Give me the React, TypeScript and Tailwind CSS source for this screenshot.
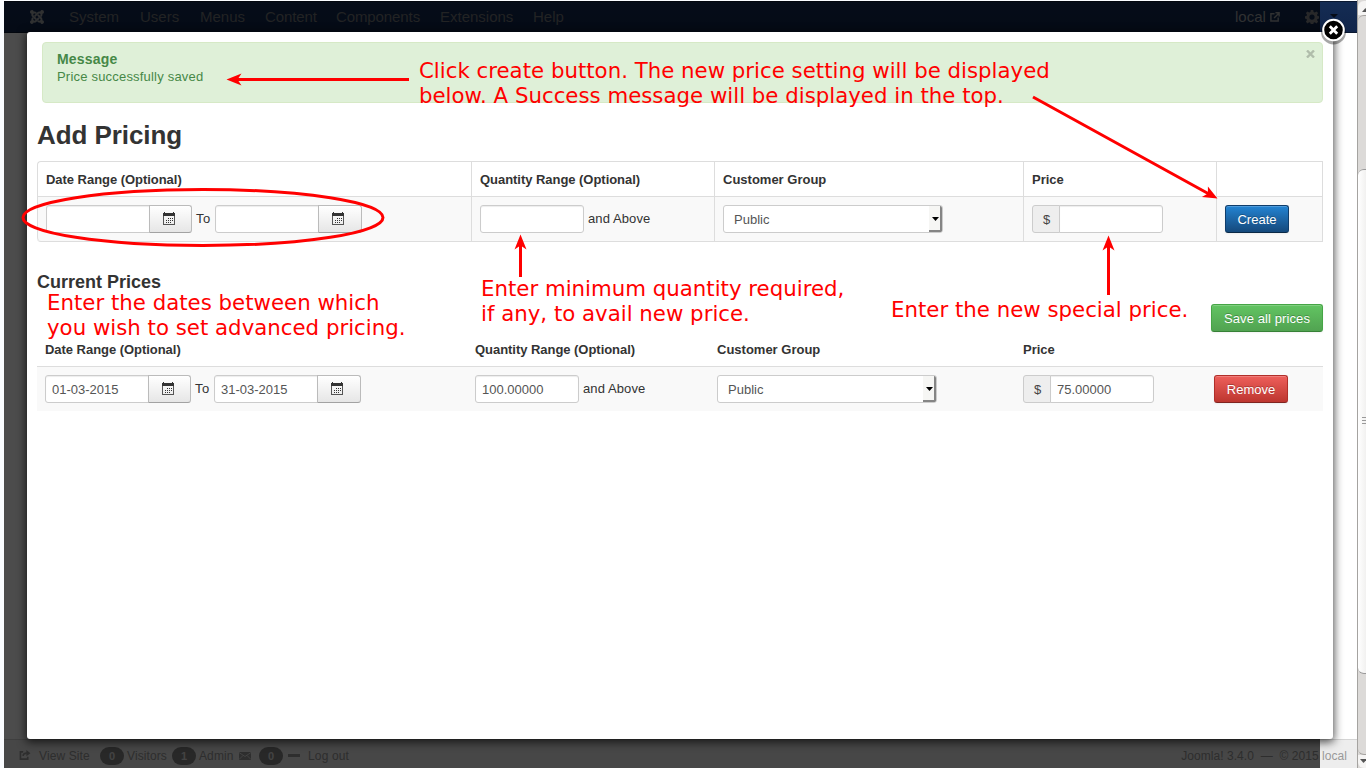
import React from "react";
import { FaJoomla } from "react-icons/fa";

function CalendarIcon() {
  return (
    <svg width="12" height="14" viewBox="0 0 12 14" shapeRendering="crispEdges">
      <path d="M0 1h1V0h1v1h8V0h1v1h1v3H0z" fill="#333" />
      <path d="M0 4h1v9H0zM11 4h1v9h-1zM0 12h12v1H0z" fill="#555" />
      <path d="M5 6h1v1H5zM7 6h1v1H7zM9 6h1v1H9zM3 8h1v1H3zM5 8h1v1H5zM7 8h1v1H7zM9 8h1v1H9zM3 10h1v1H3zM5 10h1v1H5zM7 10h1v1H7z" fill="#333" />
    </svg>
  );
}

function Field({ value = "", className = "rounded-[3px]" }: { value?: string; className?: string }) {
  return (
    <input
      readOnly
      defaultValue={value}
      className={`h-7 w-[104px] border border-[#ccc] bg-white px-1.5 text-[13px] text-[#555] shadow-[inset_0_1px_1px_rgba(0,0,0,0.075)] outline-none ${className}`}
    />
  );
}

function DateField({ value, buttonWidth }: { value?: string; buttonWidth: string }) {
  return (
    <div className="flex">
      <Field value={value} className="rounded-l-[3px]" />
      <button className={`-ml-px flex h-7 items-center justify-start rounded-r-[3px] border border-[#bbb] border-b-[#a2a2a2] bg-linear-to-b from-white to-[#e6e6e6] pl-[13px] ${buttonWidth}`}>
        <CalendarIcon />
      </button>
    </div>
  );
}

function DateRange({ from, to }: { from?: string; to?: string }) {
  return (
    <div className="flex">
      <DateField value={from} buttonWidth="w-[43px]" />
      <span className="w-[23px] pt-[5px] pl-1 tracking-[0.4px]">To</span>
      <DateField value={to} buttonWidth="w-11" />
    </div>
  );
}

function Quantity({ value }: { value?: string }) {
  return (
    <div className="flex">
      <Field value={value} />
      <span className="pt-[5px] pl-1 tracking-[0.1px]">and Above</span>
    </div>
  );
}

function GroupSelect() {
  return (
    <div className="flex h-7 w-[220px] items-stretch justify-between overflow-hidden rounded-[3px] border border-[#ccc] bg-white">
      <span className="pt-[5px] pl-2.5 text-[#555]">Public</span>
      <span className="flex w-[13px] items-center justify-center border-r-2 border-b-2 border-r-[#858585] border-b-[#858585] bg-[#f6f6f4] pt-px pl-px">
        <svg className="shrink-0" width="7" height="4" viewBox="0 0 7 4"><path d="M0 0h7L3.500 4z" fill="#000" /></svg>
      </span>
    </div>
  );
}

function Price({ value }: { value?: string }) {
  return (
    <div className="flex">
      <span className="flex h-7 w-7 items-center justify-center rounded-l-[3px] border border-[#ccc] bg-[#eee] pt-0.5 pl-px text-[#444]">$</span>
      <Field value={value} className="-ml-px rounded-r-[3px]" />
    </div>
  );
}

const button =
  "h-7 rounded-[3px] border pt-px text-[13px] text-white shadow-[inset_0_1px_0_rgba(255,255,255,0.2),0_1px_2px_rgba(0,0,0,0.05)] [text-shadow:0_-1px_0_rgba(0,0,0,0.25)]";

function MainPage() {
  return (
    <div className="flex h-full flex-1 flex-col">
      <nav className="mt-px flex h-8 shrink-0 items-center border-t border-b border-[#0a1830] bg-linear-to-b from-[#142c54] to-[#11254a] pl-[25px] text-[15px] text-[#727578]">
        <FaJoomla className="mr-6 text-[16px] text-[#a0a3a6]" />
        <div className="flex">
          <span className="w-[71px]">System</span>
          <span className="w-[60px]">Users</span>
          <span className="w-[65px]">Menus</span>
          <span className="w-[71px] tracking-[-0.1px]">Content</span>
          <span className="w-[104px] tracking-[-0.1px]">Components</span>
          <span className="w-[93px]">Extensions</span>
          <span>Help</span>
        </div>
        <div className="ml-auto flex w-[122px] items-center text-[14px] text-[#a0a3a6]">
          <span className="text-[15px]">local</span>
          <svg className="ml-1" width="10" height="10" viewBox="0 0 11 11" fill="none" stroke="currentColor" strokeWidth="1.6">
            <path d="M5 2H1v8h8V6M6 .9h4v4M10 1L4.5 6.5" />
          </svg>
          <svg className="ml-[25px]" width="14" height="14" viewBox="0 0 14 14">
            <path d="M5.8 0h2.4l.4 2 1.2.5 1.7-1.1 1.6 1.6-1.1 1.7.5 1.2 2 .4v2.2l-2 .4-.5 1.2 1.1 1.7-1.6 1.6-1.7-1.1-1.2.5-.4 2H5.800l-.4-2-1.200-.5-1.700 1.100-1.600-1.600 1.100-1.700-.5-1.200-2-.4V6.300l2-.4.5-1.200L.9 3l1.600-1.600 1.700 1.100L5.400 2zM7 4.500a2.600 2.600 0 100 5.200 2.600 2.600 0 000-5.200z" fill="#85888b" fillRule="evenodd" />
          </svg>
          <svg className="mb-0.5 ml-[11px]" width="8" height="4" viewBox="0 0 8 4"><path d="M0 0h8L4 4z" fill="#060c18" /></svg>
        </div>
      </nav>
      <div className="flex-1 bg-white" />
      <footer className="flex h-[29px] shrink-0 items-center border-t border-[#d4d4d4] bg-[#ededed] pt-1 pr-2.5 pl-[15px] text-[12px] text-[#999]">
        <svg className="mb-0.5" width="12" height="10" viewBox="0 0 12 11" fill="none" stroke="currentColor" strokeWidth="1.8">
          <path d="M4 2H1v8h8V7.500M4 6.500c0-2 1.500-3 4-3" />
          <path d="M7.500 0L12 3.500 7.500 7z" fill="currentColor" stroke="none" />
        </svg>
        <span className="ml-2 w-[61px] tracking-[0.1px]">View Site</span>
        <b className="flex h-[18px] w-6 items-center justify-center rounded-full bg-[#858585] text-[11px] text-[#e0e0e0]">0</b>
        <span className="ml-[3px] w-[45px] tracking-[0.1px]">Visitors</span>
        <b className="flex h-[18px] w-6 items-center justify-center rounded-full bg-[#858585] text-[11px] text-[#e0e0e0]">1</b>
        <span className="ml-[3px] w-10 tracking-[0.1px]">Admin</span>
        <svg width="12" height="8" viewBox="0 0 12 8">
          <path d="M0 0h12v8H0z" fill="currentColor" />
          <path d="M0 .5l6 4 6-4M0 7.500l4-4M12 7.500l-4-4" fill="none" stroke="#ededed" strokeWidth=".8" />
        </svg>
        <b className="ml-2 flex h-[18px] w-6 items-center justify-center rounded-full bg-[#858585] text-[11px] text-[#e0e0e0]">0</b>
        <span className="mb-0.5 ml-[5px] h-[3px] w-3 bg-[#999]" />
        <span className="ml-2 tracking-[0.15px]">Log out</span>
        <span className="ml-auto tracking-[0.05px] whitespace-pre">Joomla! 3.4.0  —  © 2015 local</span>
      </footer>
    </div>
  );
}

function Scrollbar() {
  return (
    <div className="flex h-full w-[9px] flex-col overflow-hidden border-l border-[#a5a3a0] bg-[#dcdad8] pt-px">
      <div className="flex h-[14px] w-4 shrink-0 items-center rounded-tl-[6px] bg-[#f5f4f3] pt-1 pl-1">
        <svg width="7" height="4" viewBox="0 0 7 4"><path d="M0 4h7L3.500 0z" fill="#555" /></svg>
      </div>
      <div className="h-[154px] w-4 shrink-0 rounded-tl-[6px] border-t border-[#a5a3a0] bg-[#dcdad8]" />
      <div className="flex h-[505px] w-4 shrink-0 flex-col justify-center gap-0.5 rounded-l-[6px] border border-l-0 border-[#999] bg-linear-to-r from-white to-[#e6e5e3] pb-0.5 pl-1">
        <i className="h-px bg-[#999]" />
        <i className="h-px bg-[#999]" />
        <i className="h-px bg-[#999]" />
      </div>
      <div className="w-4 flex-1 rounded-bl-[6px] border-b border-[#a5a3a0]" />
      <div className="flex h-[13px] w-4 shrink-0 items-start rounded-bl-[6px] bg-[#f5f4f3] pt-1 pl-0.5">
        <svg width="7" height="4" viewBox="0 0 7 4"><path d="M0 0h7L3.500 4z" fill="#555" /></svg>
      </div>
    </div>
  );
}

function PricingDialog() {
  return (
    <div className="absolute top-8 left-[27px] flex h-[707px] w-[1306px] flex-col rounded-[3px] bg-white px-2.5 pt-2.5 shadow-[0_2px_10px_1px_rgba(0,0,0,0.7)]">
      <section className="mx-[5px] mr-0 flex h-[61px] shrink-0 justify-between rounded-[4px] border border-[#d6e9c6] bg-[#dff0d8] pt-[7px] pr-[7px] pl-3.5 text-[#468847]">
        <div>
          <h4 className="text-[14px] leading-[18px] font-bold tracking-[0.2px]">Message</h4>
          <p className="leading-[18px] tracking-[0.2px]">Price successfully saved</p>
        </div>
        <svg width="9" height="8" viewBox="0 0 9 8"><path d="M1 .5l7 7M8 .5l-7 7" stroke="#b0bdab" strokeWidth="2.400" /></svg>
      </section>
      <h1 className="mt-[14px] text-[26px] leading-9 font-bold tracking-[-0.08px]">Add Pricing</h1>

      <div className="mt-2 grid shrink-0 grid-cols-[434px_243px_309px_193px_107px] grid-rows-[35px_45px] rounded-bl-[4px] border-b border-[#ddd] *:border-t *:border-l *:border-[#ddd] *:px-2">
        <b className="rounded-tl-[4px] pt-[9px] tracking-[-0.04px]">Date Range (Optional)</b>
        <b className="pt-[9px] tracking-[-0.04px]">Quantity Range (Optional)</b>
        <b className="pt-[9px]">Customer Group</b>
        <b className="pt-[9px]">Price</b>
        <b className="border-r" />
        <div className="rounded-bl-[4px] bg-[#f9f9f9] pt-2"><DateRange /></div>
        <div className="bg-[#f9f9f9] pt-2"><Quantity /></div>
        <div className="bg-[#f9f9f9] pt-2"><GroupSelect /></div>
        <div className="bg-[#f9f9f9] pt-2"><Price /></div>
        <div className="border-r bg-[#f9f9f9] pt-2">
          <button className={`${button} w-16 border-[#0f3d6b] border-b-[#0a2947] bg-linear-to-b from-[#2384d3] to-[#15497c]`}>Create</button>
        </div>
      </div>

      <h3 className="mt-[27px] text-[18px] leading-[26px] font-bold">Current Prices</h3>
      <div className="mt-[9px] flex justify-end">
        <button className={`${button} w-28 border-[#46a546] border-b-[#378137] bg-linear-to-b from-[#62c462] to-[#51a351] tracking-[0.1px]`}>Save all prices</button>
      </div>

      <div className="grid shrink-0 grid-cols-[430px_242px_306px_191px_117px] grid-rows-[34px_45px] *:px-2">
        <b className="pt-[9px] tracking-[-0.04px]">Date Range (Optional)</b>
        <b className="pt-[9px] tracking-[-0.04px]">Quantity Range (Optional)</b>
        <b className="pt-[9px]">Customer Group</b>
        <b className="pt-[9px]">Price</b>
        <b />
        <div className="border-t border-[#ddd] bg-[#f9f9f9] pt-2"><DateRange from="01-03-2015" to="31-03-2015" /></div>
        <div className="border-t border-[#ddd] bg-[#f9f9f9] pt-2"><Quantity value="100.00000" /></div>
        <div className="border-t border-[#ddd] bg-[#f9f9f9] pt-2"><GroupSelect /></div>
        <div className="border-t border-[#ddd] bg-[#f9f9f9] pt-2"><Price value="75.00000" /></div>
        <div className="border-t border-[#ddd] bg-[#f9f9f9] pt-2">
          <button className={`${button} w-[74px] border-[#b02f2a] border-b-[#802420] bg-linear-to-b from-[#ee5f5b] to-[#bd362f]`}>Remove</button>
        </div>
      </div>

      <svg className="absolute -top-[15px] right-[-14px]" width="27" height="30" viewBox="0 0 27 30">
        <circle cx="13.5" cy="15" r="12.5" fill="#000" opacity=".35" />
        <circle cx="13.5" cy="13" r="10.300" fill="#000" stroke="#fff" strokeWidth="2" />
        <path d="M9.800 9.300l7.400 7.400M17.200 9.300l-7.400 7.400" stroke="#fff" strokeWidth="2.800" />
      </svg>
    </div>
  );
}

const note = "absolute whitespace-pre font-['DejaVu_Sans'] text-[21.3px] leading-[25px] text-[#f00]";

function Annotations() {
  return (
    <div className="pointer-events-none absolute inset-0">
      <svg className="absolute inset-0" width="1366" height="768" viewBox="0 0 1366 768" fill="none" stroke="#f00" strokeWidth="3">
        <ellipse cx="203" cy="217.500" rx="180" ry="28" />
        <path d="M409 79.500H237M1033 97l176 97M520.500 277v-33M1108.500 295v-50" />
        <g fill="#f00" stroke="none">
          <path d="M226.500 79.500l15-6-4 6 4 6z" />
          <path d="M1217.500 198.500l-15.600-1.500 6-3.500 0-7z" />
          <path d="M520.500 234.500l6 15-6-4-6 4z" />
          <path d="M1108.500 235.500l6 15-6-4-6 4z" />
        </g>
      </svg>
      <p className={`${note} top-[58px] left-[419px]`}>{"Click create button. The new price setting will be displayed\nbelow. A Success message will be displayed in the top."}</p>
      <p className={`${note} top-[290px] left-[47px]`}>{"Enter the dates between which\nyou wish to set advanced pricing."}</p>
      <p className={`${note} top-[276px] left-[481px]`}>{"Enter minimum quantity required,\nif any, to avail new price."}</p>
      <p className={`${note} top-[297px] left-[891px]`}>Enter the new special price.</p>
    </div>
  );
}

export default function App() {
  return (
    <div className="relative flex h-[768px] w-[1366px] overflow-hidden bg-[#fafcff] pl-1 font-['Liberation_Sans',Arial,sans-serif] text-[13px] leading-[18px] text-[#333]">
      <MainPage />
      <Scrollbar />
      <div className="absolute top-px bottom-0 left-1 w-[1316px] bg-black/70" />
      <PricingDialog />
      <Annotations />
    </div>
  );
}
